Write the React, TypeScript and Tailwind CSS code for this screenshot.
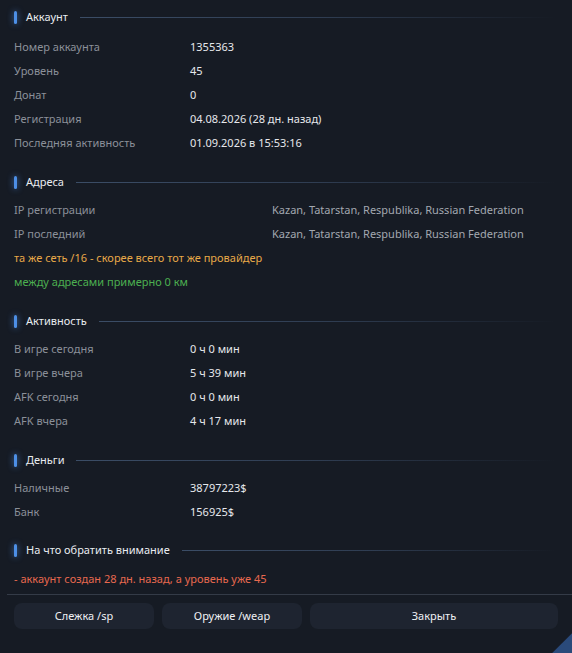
import React from 'react';

type Row = { label: string; value: string };

function SectionHeader({ title }: { title: string }) {
  return (
    <div className="flex items-center h-[18px]">
      <span className="w-[3px] h-[13px] rounded-sm bg-[#4d8fe6] shadow-[0_0_6px_rgba(77,143,230,0.8)] ml-[14px]" />
      <span className="ml-[9px] text-[11px] text-[#e9ecf1]">{title}</span>
      <span className="ml-[12px] flex-1 h-px bg-gradient-to-r from-[#3b4d66] via-[#2f3d52] to-transparent mr-[16px]" />
    </div>
  );
}

function InfoRows({ rows, valueX = 'pl-[190px]', valueColor = 'text-[#e6e8ec]' }: { rows: Row[]; valueX?: string; valueColor?: string }) {
  return (
    <div className="flex flex-col">
      {rows.map((r) => (
        <div key={r.label} className="relative h-[24px] flex items-center text-[11px]">
          <span className="absolute left-[14px] text-[#8b9099]">{r.label}</span>
          <span className={`${valueX} ${valueColor}`}>{r.value}</span>
        </div>
      ))}
    </div>
  );
}

export default function App() {
  const account: Row[] = [
    { label: 'Номер аккаунта', value: '1355363' },
    { label: 'Уровень', value: '45' },
    { label: 'Донат', value: '0' },
    { label: 'Регистрация', value: '04.08.2026 (28 дн. назад)' },
    { label: 'Последняя активность', value: '01.09.2026 в 15:53:16' },
  ];
  const addresses: Row[] = [
    { label: 'IP регистрации', value: 'Kazan, Tatarstan, Respublika, Russian Federation' },
    { label: 'IP последний', value: 'Kazan, Tatarstan, Respublika, Russian Federation' },
  ];
  const activity: Row[] = [
    { label: 'В игре сегодня', value: '0 ч 0 мин' },
    { label: 'В игре вчера', value: '5 ч 39 мин' },
    { label: 'AFK сегодня', value: '0 ч 0 мин' },
    { label: 'AFK вчера', value: '4 ч 17 мин' },
  ];
  const money: Row[] = [
    { label: 'Наличные', value: '38797223$' },
    { label: 'Банк', value: '156925$' },
  ];

  return (
    <div className="w-[572px] h-[653px] bg-[#161b24] overflow-hidden relative" style={{ fontFamily: '"Noto Sans", "Open Sans", sans-serif' }}>
      <div className="pt-[8px]">
        {/* Аккаунт */}
        <SectionHeader title="Аккаунт" />
        <div className="mt-[9px]">
          <InfoRows rows={account} />
        </div>

        {/* Адреса */}
        <div className="mt-[18px]">
          <SectionHeader title="Адреса" />
        </div>
        <div className="mt-[7px]">
          <InfoRows rows={addresses} valueX="pl-[272px]" valueColor="text-[#a3a8b0]" />
          <div className="h-[24px] flex items-center px-[14px] text-[11px] text-[#e8a948]">та же сеть /16 - скорее всего тот же провайдер</div>
          <div className="h-[24px] flex items-center px-[14px] text-[11px] text-[#4caf50]">между адресами примерно 0 км</div>
        </div>

        {/* Активность */}
        <div className="mt-[18px]">
          <SectionHeader title="Активность" />
        </div>
        <div className="mt-[7px]">
          <InfoRows rows={activity} />
        </div>

        {/* Деньги */}
        <div className="mt-[18px]">
          <SectionHeader title="Деньги" />
        </div>
        <div className="mt-[7px]">
          <InfoRows rows={money} />
        </div>

        {/* Внимание */}
        <div className="mt-[17px]">
          <SectionHeader title="На что обратить внимание" />
        </div>
        <div className="mt-[8px] h-[24px] flex items-center px-[14px] text-[11px] text-[#e8694f]">
          - аккаунт создан 28 дн. назад, а уровень уже 45
        </div>
      </div>

      {/* Footer */}
      <div className="mt-[3px] ml-[7px] h-px bg-[#343b47]" />
      <div className="flex gap-[8px] pl-[14px] pr-[14px] pt-[8px]">
        <button className="w-[140px] h-[26px] rounded-[8px] bg-[#1e2430] text-[11px] text-[#eef0f3]">Слежка /sp</button>
        <button className="w-[140px] h-[26px] rounded-[8px] bg-[#1e2430] text-[11px] text-[#eef0f3]">Оружие /weap</button>
        <button className="flex-1 h-[26px] rounded-[8px] bg-[#1e2430] text-[11px] text-[#eef0f3]">Закрыть</button>
      </div>
      <div className="absolute right-[-14px] bottom-[-14px] w-[28px] h-[28px] rotate-45 bg-[#2a4a7a]" />
    </div>
  );
}
